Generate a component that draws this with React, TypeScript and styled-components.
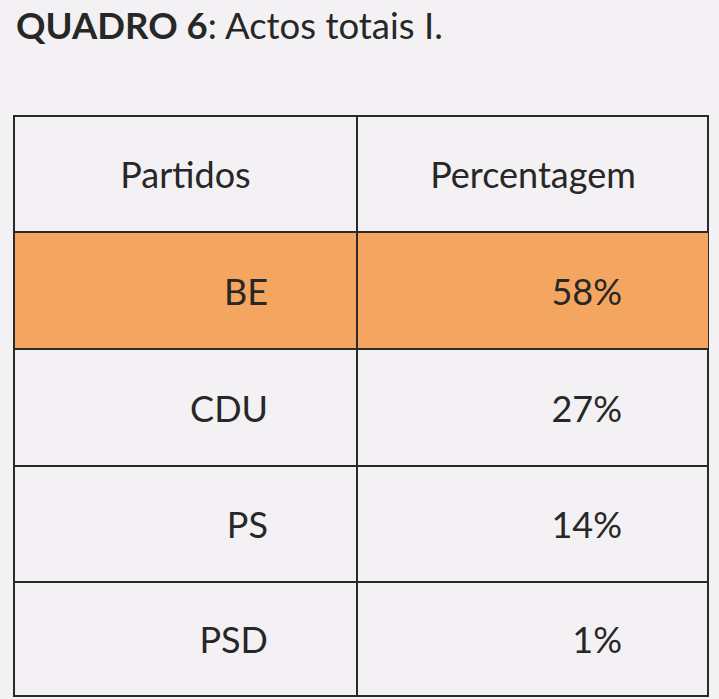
import React from "react";
import styled, { createGlobalStyle } from "styled-components";

const Global = createGlobalStyle`
  html, body { margin: 0; padding: 0; background: #f3f1f4; }
  body { font-family: Lato, "Open Sans", sans-serif; color: #272727; }
`;

const Page = styled.div`
  width: 719px;
  height: 699px;
  padding: 7px 0 0 13px;
  box-sizing: border-box;
  overflow: hidden;
`;

const Title = styled.h1`
  margin: 0 0 0 3px;
  font-size: 36.5px;
  font-weight: 400;
  line-height: 37px;
  letter-spacing: 0px;
`;

const Strong = styled.span`
  font-weight: 700;
`;

const Table = styled.div`
  margin-top: 71px;
  width: 696px;
  display: grid;
  grid-template-columns: 343px 350px;
  grid-template-rows: 116px 117px 117px 116px 111.5px;
  border: 2.5px solid #2a2a2a;
  box-sizing: border-box;
  background: #f3f1f4;
`;

const Cell = styled.div<{ $align: "center" | "right"; $pad: number; $hl?: boolean; $last?: boolean; $left?: boolean }>`
  display: flex;
  align-items: center;
  justify-content: ${(p) => (p.$align === "center" ? "center" : "flex-end")};
  padding-right: ${(p) => p.$pad}px;
  font-size: 36px;
  background: ${(p) => (p.$hl ? "#f4a660" : "transparent")};
  border-bottom: ${(p) => (p.$last ? "none" : "2.5px solid #2a2a2a")};
  border-right: ${(p) => (p.$left ? "2.5px solid #2a2a2a" : "none")};
  box-sizing: border-box;
`;

const rows = [
  { party: "BE", pct: "58%", hl: true },
  { party: "CDU", pct: "27%" },
  { party: "PS", pct: "14%" },
  { party: "PSD", pct: "1%" },
];

export default function App() {
  return (
    <>
      <Global />
      <Page>
        <Title>
          <Strong>QUADRO 6</Strong>: Actos totais I.
        </Title>
        <Table>
          <Cell $align="center" $pad={0} $left>Partidos</Cell>
          <Cell $align="center" $pad={0}>Percentagem</Cell>
          {rows.map((r, i) => (
            <React.Fragment key={r.party}>
              <Cell $align="right" $pad={88} $hl={r.hl} $left $last={i === rows.length - 1}>
                {r.party}
              </Cell>
              <Cell $align="right" $pad={86} $hl={r.hl} $last={i === rows.length - 1}>
                {r.pct}
              </Cell>
            </React.Fragment>
          ))}
        </Table>
      </Page>
    </>
  );
}
